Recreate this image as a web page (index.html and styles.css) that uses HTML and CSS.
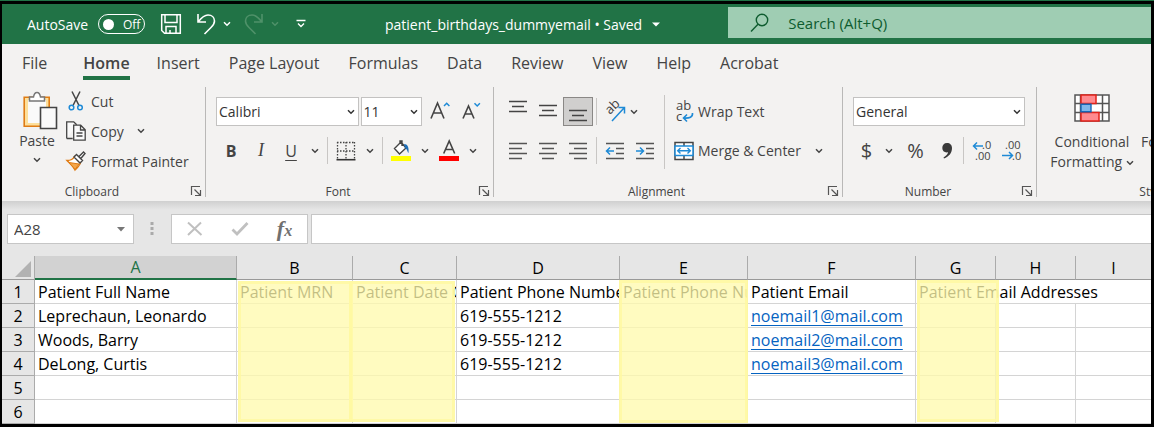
FILE: index.html
```html
<!DOCTYPE html>
<html lang="en">
<head>
<meta charset="utf-8">
<title>patient_birthdays_dummyemail - Excel</title>
<link rel="stylesheet" href="styles.css">
</head>
<body>
<svg class="defs" aria-hidden="true">
  <symbol id="chev" viewBox="0 0 8 6"><path d="M1 1.2 4 4.2 7 1.2" fill="none" stroke="currentColor" stroke-width="1.5"/></symbol>
  <symbol id="launch" viewBox="0 0 12 12"><path d="M1.5 10V1.5H10M4.5 4.5 10 10M10.5 5v5.5H5" fill="none" stroke="#555" stroke-width="1.2"/></symbol>
</svg>
<div class="window">
  <header class="titlebar">
    <div class="quick">
      <label class="autosave" for="autosave">AutoSave</label>
      <span class="toggle"><input type="checkbox" id="autosave"><span>Off</span></span>
      <button class="save" aria-label="Save"><svg width="22" height="22" viewBox="0 0 22 22" fill="none" stroke="#fff" stroke-width="1.5"><path d="M1.7 1.7h18.6v18.6H4.5L1.7 17.5zM5 2v7.5h12V2M6 20v-6.500h10V20M10 20v-3"/></svg></button>
      <button class="undo" aria-label="Undo"><svg width="20" height="22" viewBox="0 0 20 22" fill="none" stroke="#fff" stroke-width="1.6"><path d="M2 1v8h8M2.500 8.500C6 4 8.500 2 12 2c4 0 6.500 2.600 6.500 6 0 3-1.500 4.500-3.500 6.500L8.500 21"/></svg></button>
      <button class="drop" aria-label="Undo list"><svg width="8" height="6"><use href="#chev"/></svg></button>
      <button class="undo dim" aria-label="Redo"><svg width="20" height="22" viewBox="0 0 20 22" fill="none" stroke="currentColor" stroke-width="1.6"><path d="M18 1v8h-8M17.500 8.500C14 4 11.500 2 8 2 4 2 1.500 4.600 1.500 8c0 3 1.500 4.500 3.500 6.500L11.500 21"/></svg></button>
      <button class="drop dim" aria-label="Redo list"><svg width="8" height="6"><use href="#chev"/></svg></button>
      <button class="custom" aria-label="Customize toolbar"><svg width="10" height="10" viewBox="0 0 10 10" fill="none" stroke="#fff" stroke-width="1.4"><path d="M.5 1.500h9M2 4.500 5 7.500l3-3"/></svg></button>
    </div>
    <button class="filename"><span>patient_birthdays_dummyemail • Saved</span><svg width="8" height="5" viewBox="0 0 8 5"><path d="M0 .5h8L4 4.500z" fill="#fff"/></svg></button>
    <label class="search"><svg width="20" height="20" viewBox="0 0 20 20" fill="none" stroke="#0e5c2f" stroke-width="1.4"><circle cx="12" cy="7" r="5.700"/><path d="M8 11.200 1 18.500"/></svg><input type="text" placeholder="Search (Alt+Q)" aria-label="Search"></label>
  </header>

  <nav class="tabs">
    <a class="file" href="#file">File</a><a class="active" href="#home">Home</a><a href="#insert">Insert</a><a href="#layout">Page Layout</a><a href="#formulas">Formulas</a><a href="#data">Data</a><a href="#review">Review</a><a href="#view">View</a><a href="#help">Help</a><a href="#acrobat">Acrobat</a>
  </nav>

  <section class="ribbon">
    <div class="group clipboard">
      <div class="body clip">
        <button class="paste"><svg width="42" height="40" viewBox="-6 0 42 40"><path d="M2.200 6.200h25v29h-25z" fill="#fddf9b" stroke="#e07c14" stroke-width="1.600"/><path d="M6 9h18v23H6z" fill="#fafafa"/><path d="M7.500 10V6h4c.5-3 2-4.500 3.500-4.500S18 3 18.500 6h4v4z" fill="#fff" stroke="#777" stroke-width="1.500"/><path d="M18.500 16.500h16v21h-16z" fill="#fafafa" stroke="#444" stroke-width="1.600"/></svg><span>Paste</span><svg width="8" height="6"><use href="#chev"/></svg></button>
        <div class="cliplist">
          <button><svg width="20" height="20" viewBox="0 0 20 20" fill="none"><path d="M6 0.500 13 14.500M14 .5 7 14.500" stroke="#444" stroke-width="1.500"/><circle cx="5.500" cy="16.500" r="2.300" stroke="#1e8ad6" stroke-width="1.500"/><circle cx="14" cy="16.500" r="2.300" stroke="#1e8ad6" stroke-width="1.500"/></svg><span>Cut</span></button>
          <button><svg width="20" height="20" viewBox="0 0 20 20" fill="#fafafa" stroke="#444" stroke-width="1.300"><path d="M.7 17.500V.8h7l3 3M.7 17.500h6"/><path d="M7.700 4.200h7l4.500 4.500v10.500H7.700zM14.500 4.500V9H19M10.500 12h6M10.500 15h6"/></svg><span>Copy</span><svg class="after" width="8" height="6"><use href="#chev"/></svg></button>
          <button><svg width="20" height="20" viewBox="0 0 20 20"><path d="M1 9.500c3 0 6-1 7.500-4l6 6c-.5 3-3 5-5.500 7.500C7 15 4 12.500 1 9.500z" fill="#fff" stroke="#e07c14" stroke-width="1.400"/><path d="M3 11.500 13 13l-4 5.500C7 15.500 5 14 3 11.500z" fill="#f4a64a" stroke="#e07c14"/><path d="m8 6 2.500-2.500 6 6L14 12zM13 5.500 17.500 1 19 2.500 14.800 7.500" fill="#fff" stroke="#444" stroke-width="1.400"/></svg><span>Format Painter</span></button>
        </div>
      </div>
      <div class="caption"><span>Clipboard</span><button aria-label="Clipboard options"><svg width="12" height="12"><use href="#launch"/></svg></button></div>
    </div>

    <div class="group font">
      <div class="body">
        <div class="line">
          <span class="combo family"><select aria-label="Font"><option>Calibri</option></select><svg width="8" height="6"><use href="#chev"/></svg></span>
          <span class="combo size"><select aria-label="Font size"><option>11</option></select><svg width="8" height="6"><use href="#chev"/></svg></span>
          <button class="tool" aria-label="Increase font size"><svg width="22" height="22" viewBox="0 0 22 22" fill="none"><path d="M3 17.500 9.500 2 16 17.500M5.500 12h8" stroke="#444" stroke-width="1.600"/><path d="m16 5 2.700-2.700L21.400 5" stroke="#1e8ad6" stroke-width="1.500"/></svg></button>
          <button class="tool" aria-label="Decrease font size"><svg width="22" height="22" viewBox="0 0 22 22" fill="none"><path d="M5 17.500 10.500 5 16 17.500M7 13h7" stroke="#444" stroke-width="1.600"/><path d="m16.500 2.300 2.700 2.700 2.700-2.700" stroke="#1e8ad6" stroke-width="1.500"/></svg></button>
        </div>
        <div class="line">
          <button class="tool bold">B</button><button class="tool italic">I</button><button class="tool underline">U</button><button class="arrow" aria-label="Underline styles"><svg width="8" height="6"><use href="#chev"/></svg></button>
          <i class="rule"></i>
          <button class="tool" aria-label="Borders"><svg width="20" height="20" viewBox="0 0 20 20" fill="none"><path d="M1 1.500h18M1 10h18M1.500 1v17M10 1v17M18.500 1v17" stroke="#444" stroke-width="1.300" stroke-dasharray="1.500 1.500"/><path d="M.5 18.700h19" stroke="#333" stroke-width="1.600"/></svg></button><button class="arrow" aria-label="Border styles"><svg width="8" height="6"><use href="#chev"/></svg></button>
          <i class="rule"></i>
          <button class="tool" aria-label="Fill color"><svg width="20" height="22" viewBox="0 0 20 22"><path d="M3.500 8.500 10 2l5 6-6.500 6zM9 4V1h2v5" fill="#fff" stroke="#444" stroke-width="1.400"/><path d="M13 4c3.500 0 5 3 4.500 9-1.500-1.500-1-4-3.500-5z" fill="#1e6fb8"/><path d="M0 16h20v5H0z" fill="#ff0"/></svg></button><button class="arrow" aria-label="Fill colors"><svg width="8" height="6"><use href="#chev"/></svg></button>
          <button class="tool" aria-label="Font color"><svg width="20" height="22" viewBox="0 0 20 22"><path d="M4.700 13.500 10.200 1l5.500 12.500M6.700 9.500h7" fill="none" stroke="#444" stroke-width="1.600"/><path d="M0 16h20v5H0z" fill="#f00"/></svg></button><button class="arrow" aria-label="Font colors"><svg width="8" height="6"><use href="#chev"/></svg></button>
        </div>
      </div>
      <div class="caption"><span>Font</span><button aria-label="Font options"><svg width="12" height="12"><use href="#launch"/></svg></button></div>
    </div>

    <div class="group align">
      <div class="body alignbody">
        <div class="lines">
          <div class="line">
            <button class="tool" aria-label="Top align"><svg width="20" height="28" viewBox="0 0 20 28" stroke="#444" stroke-width="1.500"><path d="M1 3.500h18M4 8.500h12M1 13.500h18"/></svg></button>
            <button class="tool" aria-label="Middle align"><svg width="20" height="28" viewBox="0 0 20 28" stroke="#444" stroke-width="1.500"><path d="M1 7.500h18M4 12.500h12M1 17.500h18"/></svg></button>
            <button class="tool on" aria-label="Bottom align"><svg width="20" height="28" viewBox="0 0 20 28" stroke="#444" stroke-width="1.500"><path d="M1 12.500h18M4 17.500h12M1 22.500h18"/></svg></button>
            <i class="rule"></i>
            <button class="tool" aria-label="Orientation"><svg width="22" height="22" viewBox="0 0 22 22"><text x="0" y="0" transform="translate(6 14) rotate(-45)" class="abtext">ab</text><path d="M8 20 20 7M14.500 6.500h6v6" fill="none" stroke="#1e8ad6" stroke-width="1.500"/></svg></button><button class="arrow near" aria-label="Orientation list"><svg width="8" height="6"><use href="#chev"/></svg></button>
          </div>
          <div class="line">
            <button class="tool" aria-label="Align left"><svg width="20" height="20" viewBox="0 0 20 20" stroke="#555" stroke-width="1.500"><path d="M1 2.500h18M1 7.500h13M1 12.500h18M1 17.500h13"/></svg></button>
            <button class="tool" aria-label="Center"><svg width="20" height="20" viewBox="0 0 20 20" stroke="#555" stroke-width="1.500"><path d="M1 2.500h18M4 7.500h12M1 12.500h18M4 17.500h12"/></svg></button>
            <button class="tool" aria-label="Align right"><svg width="20" height="20" viewBox="0 0 20 20" stroke="#555" stroke-width="1.500"><path d="M1 2.500h18M6 7.500h13M1 12.500h18M6 17.500h13"/></svg></button>
            <i class="rule"></i>
            <button class="tool" aria-label="Decrease indent"><svg width="20" height="20" viewBox="0 0 20 20" fill="none" stroke="#555" stroke-width="1.500"><path d="M1 2.500h18M11 7.500h8M11 12.500h8M1 17.500h18"/><path d="M9 10H2M5 6.500 1.500 10 5 13.500" stroke="#1e8ad6"/></svg></button>
            <button class="tool" aria-label="Increase indent"><svg width="20" height="20" viewBox="0 0 20 20" fill="none" stroke="#555" stroke-width="1.500"><path d="M1 2.500h18M11 7.500h8M11 12.500h8M1 17.500h18"/><path d="M1 10h7M5 6.500 8.500 10 5 13.500" stroke="#1e8ad6"/></svg></button>
          </div>
        </div>
        <i class="rule tall"></i>
        <div class="lines wide">
          <div class="line"><button class="labelled"><svg width="20" height="22" viewBox="0 0 20 22"><text x="2" y="9" class="abtext">ab</text><text x="2" y="20" class="abtext">c</text><path d="M18.500 12c.5 4-3 5.500-9 5M13 13.500 9.500 17l3.500 3.500" fill="none" stroke="#1e8ad6" stroke-width="1.600"/></svg><span>Wrap Text</span></button></div>
          <div class="line"><button class="labelled"><svg width="20" height="20" viewBox="0 0 20 20" fill="#fff"><path d="M1 1.500h18v17H1zM10 1v5M10 14v5" stroke="#444" stroke-width="1.500"/><path d="M1 5h18v9.500H1z" stroke="#1e8ad6" stroke-width="1.500"/><path d="M4 9.700h12M6.500 7 3.700 9.700l2.800 2.800M13.500 7l2.800 2.700-2.800 2.800" fill="none" stroke="#1e8ad6" stroke-width="1.400"/></svg><span>Merge &amp; Center</span><svg class="after" width="8" height="6"><use href="#chev"/></svg></button></div>
        </div>
      </div>
      <div class="caption"><span>Alignment</span><button aria-label="Alignment options"><svg width="12" height="12"><use href="#launch"/></svg></button></div>
    </div>

    <div class="group number">
      <div class="body">
        <div class="line"><span class="combo format"><select aria-label="Number format"><option>General</option></select><svg width="8" height="6"><use href="#chev"/></svg></span></div>
        <div class="line">
          <button class="tool sym">$</button><button class="arrow" aria-label="Currency list"><svg width="8" height="6"><use href="#chev"/></svg></button>
          <button class="tool sym pct">%</button>
          <button class="tool comma" aria-label="Comma style"><svg width="12" height="18" viewBox="0 0 12 18"><path d="M6 1c3 0 5 2 5 5 0 5-3 8.500-8 10.500l-.5-1C5 14 6.800 12.500 7 10.300 3.500 11 1.300 8.800 1.300 6 1.300 3 3 1 6 1z" fill="#3a3a3a"/></svg></button>
          <i class="rule"></i>
          <button class="tool" aria-label="Increase decimal"><svg width="20" height="22" viewBox="0 0 20 22"><text x="10" y="9" class="dec">.0</text><text x="3" y="20" class="dec">.00</text><path d="M11 6H1.500M5 2.500 1.500 6 5 9.500" fill="none" stroke="#1e8ad6" stroke-width="1.500"/></svg></button>
          <button class="tool" aria-label="Decrease decimal"><svg width="20" height="22" viewBox="0 0 20 22"><text x="3" y="9" class="dec">.00</text><text x="10" y="20" class="dec">.0</text><path d="M0 15.500h10.500M7 12l3.500 3.500L7 19" fill="none" stroke="#1e8ad6" stroke-width="1.500"/></svg></button>
        </div>
      </div>
      <div class="caption"><span>Number</span><button aria-label="Number options"><svg width="12" height="12"><use href="#launch"/></svg></button></div>
    </div>

    <div class="group styles">
      <div class="body stylebody">
        <button class="big"><svg width="36" height="28" viewBox="0 0 36 28"><path d="M1 1h34v26H1zM1 9.500h34M1 18.500h34M6.500 1v26M28.500 1v26" fill="#fff" stroke="#555" stroke-width="1.500"/><path d="M7 1h15v8.500H7zM7 18.500h18V27H7z" fill="#ff8a8f" stroke="#e3231b" stroke-width="1.500"/><path d="M7 10.200h10v7.600H7z" fill="#7fb6ea" stroke="#1668b8" stroke-width="1.400"/></svg><span>Conditional</span><span>Formatting <svg width="8" height="6"><use href="#chev"/></svg></span></button>
        <button class="big next"><span>Format as</span><span>Table</span></button>
      </div>
      <div class="caption"><span>Styles</span></div>
    </div>
  </section>

  <section class="formulabar">
    <div class="namebox"><input type="text" value="A28" aria-label="Name box"><button aria-label="Names"><svg width="8" height="5" viewBox="0 0 8 5"><path d="M0 0h8L4 4.500z" fill="#777"/></svg></button></div>
    <svg class="dots" width="4" height="14" viewBox="0 0 4 14" fill="#aaa"><path d="M.5 0h3v3h-3zM.5 5h3v3h-3zM.5 10h3v3h-3z"/></svg>
    <div class="fxbox">
      <button aria-label="Cancel"><svg width="18" height="16" viewBox="0 0 18 16"><path d="M2 1.500 15.500 14M15 1.500 2 14" fill="none" stroke="#c0c0c0" stroke-width="2"/></svg></button>
      <button aria-label="Enter"><svg width="18" height="16" viewBox="0 0 18 16"><path d="M1.500 8.500 6 13 16.500 2" fill="none" stroke="#c0c0c0" stroke-width="2.800"/></svg></button>
      <button class="fx" aria-label="Insert function"><i>f<small>x</small></i></button>
    </div>
    <input class="formula" type="text" aria-label="Formula">
  </section>

  <main class="sheet">
    <table>
      <colgroup><col class="rh"><col class="a"><col class="b"><col class="c"><col class="d"><col class="e"><col class="f"><col class="g"><col class="g"><col></colgroup>
      <thead><tr><th class="corner" aria-label="Select all"><svg width="16" height="16" viewBox="0 0 16 16"><path d="M16 0v16H0z" fill="#b2b2b2"/></svg></th><th class="sel">A</th><th>B</th><th>C</th><th>D</th><th>E</th><th>F</th><th>G</th><th>H</th><th>I</th></tr></thead>
      <tbody>
        <tr><th>1</th><td>Patient Full Name</td><td>Patient MRN</td><td>Patient Date Of Birth</td><td>Patient Phone Number</td><td>Patient Phone Number</td><td>Patient Email</td><td class="spill" colspan="3">Patient Email Addresses</td></tr>
        <tr><th>2</th><td>Leprechaun, Leonardo</td><td></td><td></td><td>619-555-1212</td><td></td><td><a href="mailto:noemail1@mail.com">noemail1@mail.com</a></td><td></td><td></td><td></td></tr>
        <tr><th>3</th><td>Woods, Barry</td><td></td><td></td><td>619-555-1212</td><td></td><td><a href="mailto:noemail2@mail.com">noemail2@mail.com</a></td><td></td><td></td><td></td></tr>
        <tr><th>4</th><td>DeLong, Curtis</td><td></td><td></td><td>619-555-1212</td><td></td><td><a href="mailto:noemail3@mail.com">noemail3@mail.com</a></td><td></td><td></td><td></td></tr>
        <tr><th>5</th><td></td><td></td><td></td><td></td><td></td><td></td><td></td><td></td><td></td></tr>
        <tr><th>6</th><td></td><td></td><td></td><td></td><td></td><td></td><td></td><td></td><td></td></tr>
      </tbody>
    </table>
    <div class="mark mark-b"></div><div class="mark mark-c"></div><div class="mark mark-e"></div><div class="mark mark-g"></div>
  </main>
</div>
</body>
</html>
```

FILE: styles.css
```css
* { box-sizing: border-box; }
body { margin: 0; padding-top: 1px; background: #217346; font-family: "Open Sans", "Noto Sans", sans-serif; color: #444; }
button, input, select { font: inherit; color: inherit; border: 0; background: none; padding: 0; margin: 0; outline: 0; }
button { display: flex; align-items: center; justify-content: center; white-space: nowrap; }
svg { display: block; flex: none; overflow: visible; }
.defs { position: absolute; width: 0; height: 0; }
.window { border: 3px solid #000; border-left-width: 2px; background: #f3f2f1; overflow: hidden; }

.titlebar { display: flex; align-items: center; height: 40px; background: #217346; color: #fff; font-size: 14px; padding-left: 25px; }
.quick { display: flex; align-items: center; width: 358px; }
.autosave { width: 71px; white-space: nowrap; }
.toggle { display: flex; align-items: center; gap: 9px; width: 47px; height: 20px; border: 1px solid #fff; border-radius: 10px; padding-left: 4px; font-size: 12px; }
.toggle input { appearance: none; flex: none; width: 11px; height: 11px; border-radius: 50%; background: #fff; }
.save { margin-left: 15px; }
.undo { margin-left: 14px; }
.drop { width: 22px; }
.dim { color: #4f9169; }
.undo.dim { margin-left: 6px; }
.custom { margin-left: 10px; }
.filename { gap: 10px; }
.search { display: flex; align-items: center; gap: 18px; flex: 1; height: 31px; margin: 0 0 3px 68px; padding-left: 22px; background: #9fcdb3; color: #0e5c2f; }
.search input { flex: 1; min-width: 0; font-size: 15px; }
.search input::placeholder { color: #0e5c2f; opacity: 1; }

.tabs { display: flex; gap: 29px; height: 40px; padding-left: 20px; font-size: 16px; }
.tabs a { color: #444; text-decoration: none; height: 36px; line-height: 38px; white-space: nowrap; }
.tabs .file { margin-right: 7px; }
.tabs .active { margin-right: -2px; font-weight: 600; border-bottom: 4px solid #217346; }

.ribbon { display: flex; height: 117px; padding: 3px 0 4px; font-size: 14px; }
.group { display: flex; flex-direction: column; flex: none; border-right: 1px solid #b9b8b7; }
.clipboard { width: 204px; }
.font { width: 288px; }
.align { width: 349px; }
.number { width: 194px; }
.styles { flex: 1; min-width: 0; border: 0; overflow: hidden; }
.body { flex: 1; padding: 5px 9px 0 10px; }
.caption { display: flex; align-items: center; height: 12px; padding: 0 3px 0 0; font-size: 12px; }
.caption span { flex: 1; padding-right: 8px; text-align: center; }
.styles .caption { width: 240px; }
.styles .caption span { padding: 0; }

.clip { display: flex; padding: 4px 0 0 14px; }
.paste { flex-direction: column; justify-content: flex-start; width: 42px; }
.paste span { margin-bottom: 6px; line-height: 20px; }
.cliplist { margin: -5px 0 0 8px; }
.cliplist button { height: 30px; gap: 5px; }
.after { margin-left: 8px; }

.line { display: flex; align-items: center; height: 39px; }
.tool { width: 30px; height: 30px; flex: none; }
.arrow { width: 18px; height: 30px; flex: none; }
.near { width: 8px; }
.rule { width: 1px; height: 27px; margin: 0 3px; background: #c8c6c4; flex: none; }
.combo { display: flex; align-items: center; height: 29px; margin-right: 2px; border: 1px solid #c3c2c1; background: #fff; color: #333; padding-right: 3px; }
.combo select { appearance: none; flex: 1; min-width: 0; height: 27px; padding-left: 2px; }
.family { width: 144px; }
.size { width: 62px; }
.format { width: 174px; }
.bold { font-weight: 700; font-size: 16px; }
.italic { font: italic 18px "Liberation Serif", serif; }
.underline { text-decoration: underline; font-size: 16px; text-underline-offset: 3px; }
.on { background: #d0cfce; border: 1px solid #8a8886; height: 29px; }
.abtext { font-size: 13px; fill: #444; }
.alignbody { display: flex; padding-left: 9px; }
.rule.tall { height: 74px; margin: 3px 9px 0 4px; }
.labelled { gap: 4px; }
.labelled .after { margin-left: 10px; }
.sym { font-size: 20px; width: 27px; }
.pct { width: 35px; }
.comma { width: 27px; }
.dec { font-size: 11px; fill: #444; }
.stylebody { display: flex; gap: 4px; }
.big { flex-direction: column; flex: none; width: 90px; justify-content: flex-start; }
.big span { line-height: 20px; }
.big span svg { display: inline-block; vertical-align: middle; }
.big > svg { margin: 2px 0 10px; }
.next { width: auto; padding-top: 40px; }

.formulabar { display: flex; align-items: center; height: 55px; padding: 1px 0 0 5px; background: linear-gradient(#d0d0d0, #e6e6e6 9px); font-size: 15px; }
.namebox, .fxbox, .formula { display: flex; height: 30px; border: 1px solid #c6c6c6; background: #fff; }
.namebox { width: 127px; padding: 0 8px 0 6px; }
.namebox input { flex: 1; min-width: 0; }
.dots { margin: 0 17px 0 16px; }
.fxbox { width: 137px; }
.fxbox button { flex: 1; }
.fxbox .fx { font: bold 22px "Liberation Serif", serif; color: #707070; }
.fx small { font-size: 16px; }
.formula { flex: 1; min-width: 0; margin-left: 3px; border-right: 0; }

.sheet { position: relative; background: #fff; }
table { width: 100%; table-layout: fixed; border-collapse: separate; border-spacing: 0; font-size: 16px; color: #000; }
.rh { width: 33px; } .a { width: 202px; } .b { width: 116px; } .c { width: 104px; } .d { width: 163px; } .e { width: 128px; } .f { width: 168px; } .g { width: 80px; }
th, td { height: 24px; padding: 1px 0 0 3px; line-height: 22px; border: solid #d4d4d4; border-width: 0 1px 1px 0; white-space: nowrap; overflow: hidden; text-align: left; font-weight: 400; }
th { background: #e6e6e6; border-color: #ababab; text-align: center; padding: 1px 0 0; }
thead th { border-bottom-color: #999; }
thead .sel { background: #d2d2d2; color: #217346; border-bottom: 2px solid #217346; line-height: 21px; }
.corner svg { margin: 2px 0 0 13px; }
td:last-child, th:last-child { border-right: 0; }
td a { color: #0563c1; text-underline-offset: 3px; }
.mark { position: absolute; bottom: 2px; top: 25px; background: rgba(255, 250, 172, .76); border: 3px solid rgba(255, 249, 160, .8); pointer-events: none; }
.mark-b { left: 236px; width: 115px; }
.mark-c { left: 347px; width: 106px; }
.mark-e { left: 617px; width: 129px; top: 24px; bottom: 1px; }
.mark-g { left: 915px; width: 82px; top: 24px; }
```
